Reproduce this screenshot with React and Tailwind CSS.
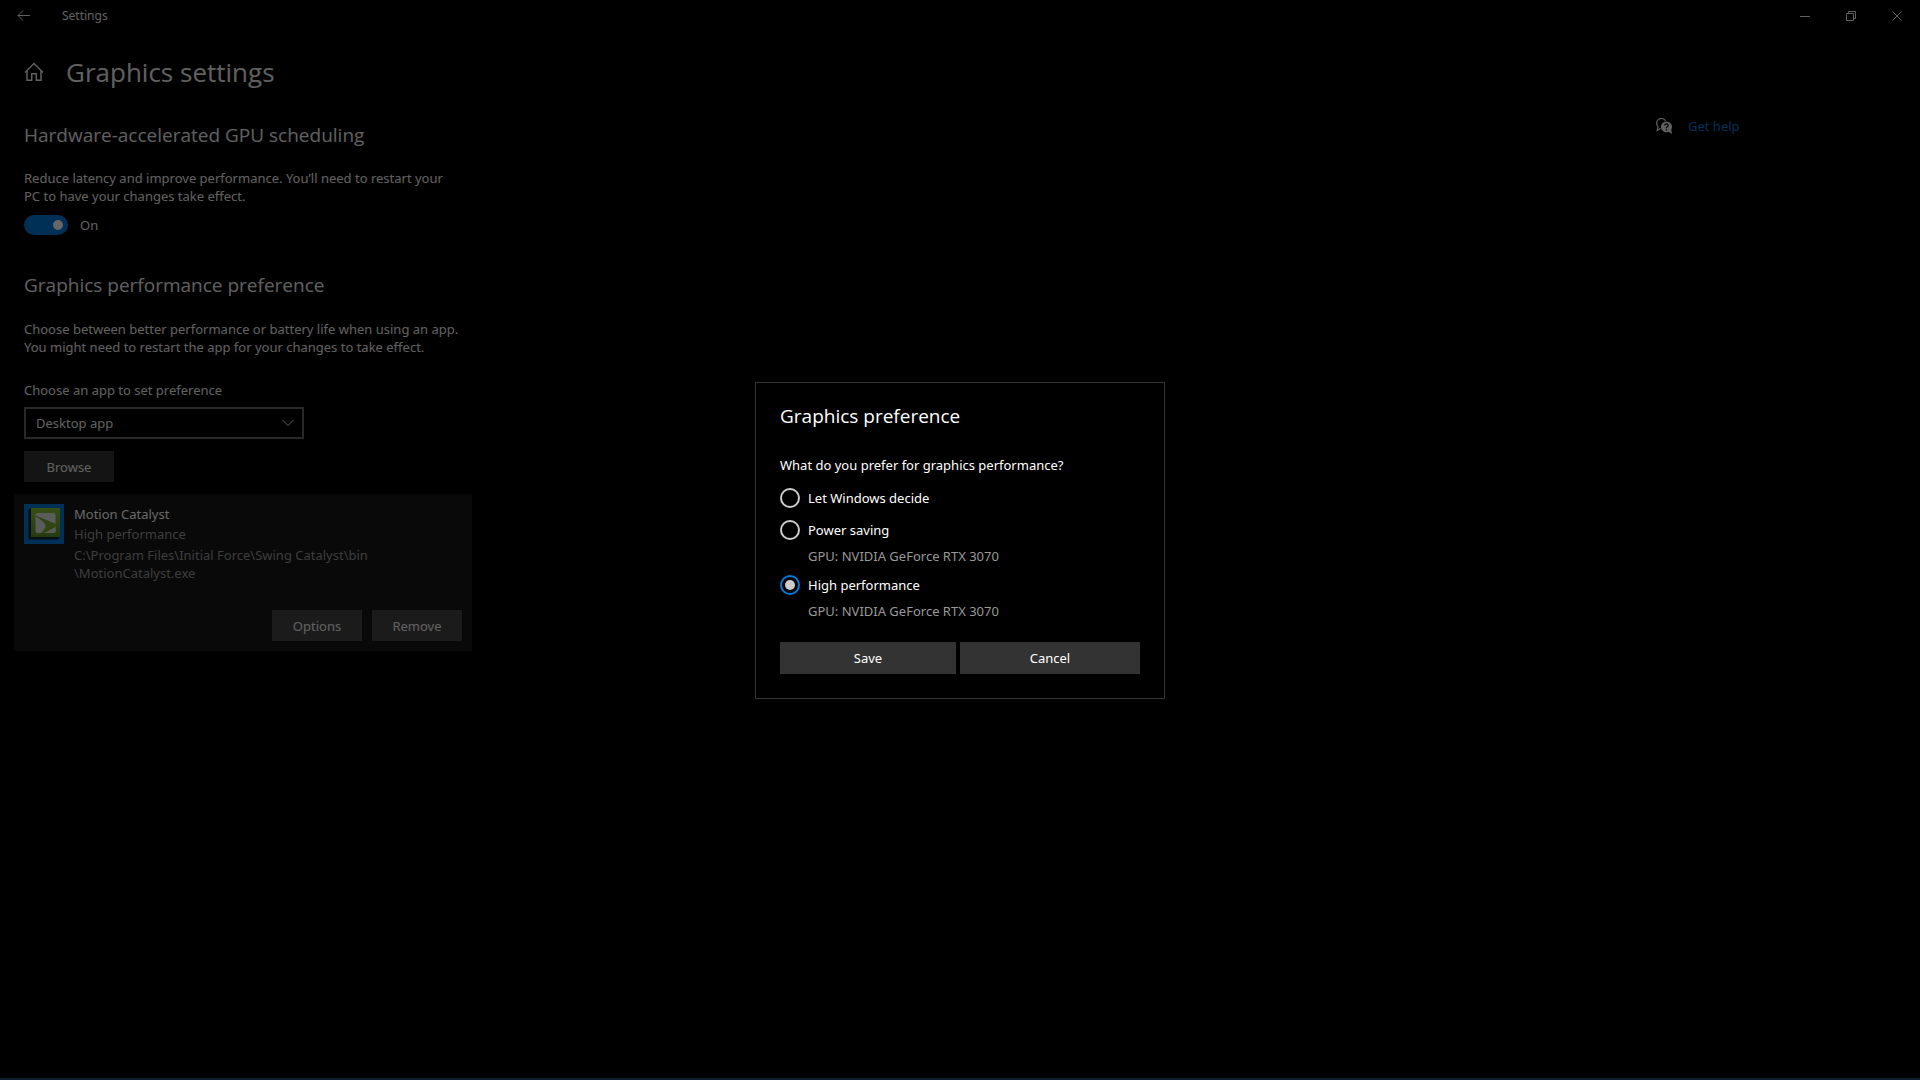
import { useState } from 'react'
import clsx from 'clsx'

function BackIcon() {
  return (
    <svg width="14" height="12" viewBox="0 0 14 12" fill="none" stroke="currentColor">
      <path d="M13 5.5H1M6 0.5L1 5.5L6 10.5" />
    </svg>
  )
}

function HomeIcon() {
  return (
    <svg width="20" height="20" viewBox="0 0 20 20" fill="none" stroke="currentColor" strokeWidth="1.5" className="shrink-0">
      <path d="M1 10.5L10 1.5L19 10.5" />
      <path d="M3 9V18.2H7.7V11.7H12.3V18.2H17V9" />
    </svg>
  )
}

function HelpIcon() {
  return (
    <svg width="16" height="16" viewBox="0 0 16 16" fill="none" className="shrink-0">
      <path d="M4.6 10.2L1.2 12.4L2 8.6A4.8 4.8 0 1 1 9.6 2.9" stroke="currentColor" strokeWidth="1.2" />
      <path d="M10.4 3.4A5.4 5.4 0 1 0 12.6 13.7L16 16L15.3 11.4A5.4 5.4 0 0 0 10.4 3.4Z" fill="currentColor" />
      <path d="M8.7 7.4C8.7 5.2 12.2 5.3 12.2 7.3C12.2 8.6 10.5 8.6 10.5 10.2M10.5 11.2V12.5" stroke="black" strokeWidth="1.2" />
    </svg>
  )
}

function ChevronIcon() {
  return (
    <svg width="12" height="8" viewBox="0 0 12 8" fill="none" stroke="currentColor" className="pointer-events-none absolute right-[10px] top-3">
      <path d="M0.5 1L6 6.5L11.5 1" />
    </svg>
  )
}

function CatalystIcon() {
  return (
    <svg width="40" height="40" viewBox="0 0 40 40" className="shrink-0">
      <defs>
        <linearGradient id="leaf" x1="0" y1="0" x2="0" y2="1">
          <stop offset="0" stopColor="#8fc534" />
          <stop offset="1" stopColor="#5f922a" />
        </linearGradient>
      </defs>
      <rect width="40" height="40" fill="#0078d7" />
      <path d="M4.5 6L7 4V33H36L33.5 35.5H4.5Z" fill="#12242e" />
      <rect x="7" y="4" width="29" height="29" fill="url(#leaf)" />
      <rect x="11.5" y="9" width="20" height="20" rx="2" fill="#e4e4e4" />
      <path d="M11.5 11.5L32 20V22L24.5 29.5H16.5C19.5 27 21.5 24 21.5 21.5C21.5 19 16 15 11.5 12.5Z" fill="#76ac2e" />
      <path d="M31.5 23V27A2 2 0 0 1 29.5 29H20.5Z" fill="#e4e4e4" />
    </svg>
  )
}

const WINDOW_BUTTONS = [
  { label: 'Minimize', d: 'M0 5.5H10' },
  { label: 'Restore', d: 'M0.5 2.5H7.5V9.5H0.5ZM2.5 2.5V0.5H9.5V7.5H7.5' },
  { label: 'Close', d: 'M0.5 0.5L9.5 9.5M9.5 0.5L0.5 9.5' },
]

const PREFERENCES = [
  { id: 'auto', label: 'Let Windows decide' },
  { id: 'saving', label: 'Power saving', gpu: 'NVIDIA GeForce RTX 3070', className: 'mt-3' },
  { id: 'high', label: 'High performance', gpu: 'NVIDIA GeForce RTX 3070', className: 'mt-[10px]' },
]

function TitleBar() {
  return (
    <header className="flex h-8 items-center">
      <button type="button" aria-label="Back" className="flex h-8 w-12 items-center justify-center">
        <BackIcon />
      </button>
      <span className="pl-[14px] text-xs leading-4">Settings</span>
      <div className="ml-auto flex">
        {WINDOW_BUTTONS.map(({ label, d }) => (
          <button key={label} type="button" aria-label={label} className="flex h-8 w-[46px] items-center justify-center">
            <svg width="10" height="10" viewBox="0 0 10 10" fill="none" stroke="currentColor">
              <path d={d} />
            </svg>
          </button>
        ))}
      </div>
    </header>
  )
}

function AppCard() {
  return (
    <article className="mt-3 -ml-[10px] w-[458px] bg-[#171717] p-[10px]">
      <div className="flex gap-[10px]">
        <CatalystIcon />
        <div>
          <h3 className="leading-5 text-white">Motion Catalyst</h3>
          <p className="leading-5 text-[#999]">High performance</p>
          <p className="mt-[2px] text-[#999]">
            C:\Program Files\Initial Force\Swing Catalyst\bin
            <br />
            \MotionCatalyst.exe
          </p>
        </div>
      </div>
      <div className="mt-7 flex justify-end gap-[10px]">
        <button type="button" className="h-[31px] w-[90px] bg-[#454545]">Options</button>
        <button type="button" className="h-[31px] w-[90px] bg-[#454545]">Remove</button>
      </div>
    </article>
  )
}

function SettingsPage() {
  const [scheduling, setScheduling] = useState(true)

  return (
    <div className="text-[#f0f0f0]">
      <TitleBar />
      <div className="mt-5 flex items-center gap-[22px] pl-6">
        <HomeIcon />
        <h1 className="font-['Open_Sans',sans-serif] text-[26px] leading-10">Graphics settings</h1>
      </div>

      <div className="flex justify-between">
        <main className="pt-[29px] pl-6">
          <section>
            <h2 className="font-['Open_Sans',sans-serif] text-[19px] leading-7">Hardware-accelerated GPU scheduling</h2>
            <p className="mt-5">
              Reduce latency and improve performance. You’ll need to restart your
              <br />
              PC to have your changes take effect.
            </p>
            <label className="mt-[10px] flex h-5 items-center gap-3">
              <input
                type="checkbox"
                role="switch"
                checked={scheduling}
                onChange={(e) => setScheduling(e.target.checked)}
                className="flex h-5 w-11 appearance-none items-center rounded-full bg-[#666] px-[5px] before:size-[10px] before:rounded-full before:bg-white checked:justify-end checked:bg-[#0078d7]"
              />
              {scheduling ? 'On' : 'Off'}
            </label>
          </section>

          <section className="mt-9">
            <h2 className="font-['Open_Sans',sans-serif] text-[19px] leading-7">Graphics performance preference</h2>
            <p className="mt-[21px]">
              Choose between better performance or battery life when using an app.
              <br />
              You might need to restart the app for your changes to take effect.
            </p>
            <label htmlFor="app-type" className="mt-[25px] block">Choose an app to set preference</label>
            <div className="relative mt-2 w-[280px]">
              <select id="app-type" className="block h-8 w-full appearance-none border-2 border-[#666] bg-black px-[10px]">
                <option>Desktop app</option>
                <option>Microsoft Store app</option>
              </select>
              <ChevronIcon />
            </div>
            <button type="button" className="mt-3 block h-[31px] w-[90px] bg-[#333]">Browse</button>
            <AppCard />
          </section>
        </main>

        <aside className="w-[264px] pt-[25px]">
          <a href="#help" className="flex items-center gap-4">
            <HelpIcon />
            <span className="text-[#0078d7]">Get help</span>
          </a>
        </aside>
      </div>
    </div>
  )
}

function PreferenceDialog() {
  const [preference, setPreference] = useState('high')

  return (
    <div role="dialog" aria-labelledby="dialog-title" className="w-[410px] border border-[#333] bg-black px-6 pt-[19px] pb-6 text-white">
      <h2 id="dialog-title" className="font-['Open_Sans',sans-serif] text-[19px] leading-7">Graphics preference</h2>
      <fieldset>
        <legend className="pt-[26px] pb-[14px]">What do you prefer for graphics performance?</legend>
        {PREFERENCES.map(({ id, label, gpu, className }) => (
          <div key={id} className={className}>
            <label className="flex h-5 items-center gap-2">
              <input
                type="radio"
                name="preference"
                checked={preference === id}
                onChange={() => setPreference(id)}
                className={clsx(
                  'flex size-5 appearance-none items-center justify-center rounded-full border-2 border-[#ccc]',
                  'before:size-[10px] before:rounded-full checked:border-[#0078d7] checked:before:bg-[#ccc]',
                )}
              />
              {label}
            </label>
            {gpu && <p className="mt-[7px] pl-7 text-[#999]">GPU: {gpu}</p>}
          </div>
        ))}
      </fieldset>
      <div className="mt-[22px] flex gap-1">
        <button type="button" className="h-8 w-[176px] bg-[#333]">Save</button>
        <button type="button" className="h-8 flex-1 bg-[#333]">Cancel</button>
      </div>
    </div>
  )
}

export default function App() {
  return (
    <div className="flex min-h-screen flex-col bg-black font-['Noto_Sans',sans-serif] text-[13px] leading-[18px]">
      <div className="flex-1">
        <SettingsPage />
      </div>
      <div className="fixed inset-0 flex items-center justify-center bg-black/60">
        <PreferenceDialog />
      </div>
      <footer className="relative h-[2px] bg-[#0c1c2c]" />
    </div>
  )
}
